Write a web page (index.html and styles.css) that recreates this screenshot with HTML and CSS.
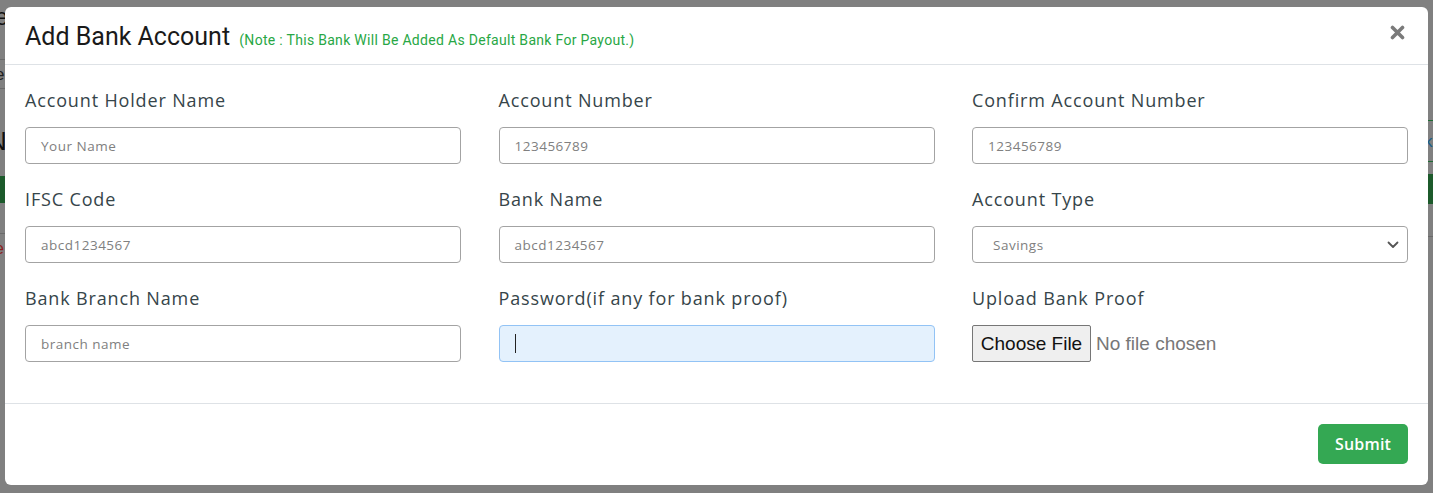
FILE: index.html
```html
<!DOCTYPE html>
<html>
<head>
<meta charset="utf-8">
<link rel="stylesheet" href="styles.css">
</head>
<body>
<div class="page">
  <div class="bg-left">
    <span class="bg-e1">e</span>
    <span class="bg-line l1"></span>
    <span class="bg-e2">e</span>
    <span class="bg-line l2"></span>
    <span class="bg-n">N</span>
    <span class="bg-green g1"></span>
    <span class="bg-line l3"></span>
    <span class="bg-red">e</span>
  </div>
  <div class="bg-right">
    <span class="bg-gline r1"></span>
    <span class="bg-blue">k</span>
    <span class="bg-gline r2"></span>
    <span class="bg-green g2"></span>
    <span class="bg-line r3"></span>
  </div>
</div>
<div class="overlay">
  <div class="modal">
    <div class="modal-header">
      <h4 class="modal-title">Add Bank Account <small class="note">(Note : This Bank Will Be Added As Default Bank For Payout.)</small></h4>
      <button class="close" type="button" aria-label="Close">
        <svg width="15" height="15" viewBox="0 0 15 15"><path d="M2.5 2.5 L12.5 12.5 M12.5 2.5 L2.5 12.5" stroke="#7a7a7a" stroke-width="3.6" stroke-linecap="round"/></svg>
      </button>
    </div>
    <div class="modal-body">
      <div class="field">
        <label>Account Holder Name</label>
        <div class="input"><span class="ph">Your Name</span></div>
      </div>
      <div class="field">
        <label>Account Number</label>
        <div class="input"><span class="ph">123456789</span></div>
      </div>
      <div class="field">
        <label>Confirm Account Number</label>
        <div class="input"><span class="ph">123456789</span></div>
      </div>
      <div class="field">
        <label>IFSC Code</label>
        <div class="input"><span class="ph">abcd1234567</span></div>
      </div>
      <div class="field">
        <label>Bank Name</label>
        <div class="input"><span class="ph">abcd1234567</span></div>
      </div>
      <div class="field">
        <label>Account Type</label>
        <div class="input select"><span class="ph sel">Savings</span>
          <svg class="chev" width="12" height="8" viewBox="0 0 12 8"><path d="M1.5 1.5 L6 6 L10.5 1.5" fill="none" stroke="#555" stroke-width="1.8" stroke-linecap="round" stroke-linejoin="round"/></svg>
        </div>
      </div>
      <div class="field">
        <label>Bank Branch Name</label>
        <div class="input"><span class="ph">branch name</span></div>
      </div>
      <div class="field">
        <label>Password(if any for bank proof)</label>
        <div class="input focus"><span class="caret"></span></div>
      </div>
      <div class="field">
        <label>Upload Bank Proof</label>
        <div class="file"><span class="file-btn">Choose File</span><span class="file-text">No file chosen</span></div>
      </div>
    </div>
    <div class="modal-footer">
      <button class="submit" type="button">Submit</button>
    </div>
  </div>
</div>
</body>
</html>
```

FILE: styles.css
```css
* { box-sizing: border-box; }
html, body { margin: 0; padding: 0; }
body {
  width: 1433px;
  height: 493px;
  overflow: hidden;
  background: #808080;
  font-family: "Open Sans", "Liberation Sans", sans-serif;
  position: relative;
}
.page { position: absolute; inset: 0; }
.bg-left, .bg-right { position: absolute; top: 0; height: 493px; }
.bg-left { left: 0; width: 6px; overflow: hidden; }
.bg-right { right: 0; width: 6px; overflow: hidden; }
.bg-left span, .bg-right span { position: absolute; display: block; }
.bg-e1 { left: -5px; top: 3px; font-size: 24px; color: #111; font-family: "Liberation Sans", sans-serif; }
.bg-e2 { left: -5px; top: 65px; font-size: 17px; color: #222; font-family: "Liberation Sans", sans-serif; }
.bg-n { left: -12px; top: 126px; font-size: 26px; color: #111; font-family: "Liberation Sans", sans-serif; }
.bg-red { left: -5px; top: 240px; font-size: 16px; color: #8b1c1c; font-family: "Liberation Sans", sans-serif; }
.bg-blue { left: -3px; top: 132px; font-size: 17px; color: #1a5e8a; font-family: "Liberation Sans", sans-serif; }
.bg-line { left: 0; width: 6px; height: 1px; background: #6a6a6a; }
.l1 { top: 59px; } .l2 { top: 88px; } .l3 { top: 233px; }
.r3 { top: 236px; }
.bg-gline { left: 0; width: 6px; height: 1px; background: #1e6b34; }
.r1 { top: 120px; } .r2 { top: 161px; }
.bg-green { left: 0; width: 6px; background: #1c5a2b; }
.g1 { top: 176px; height: 27px; }
.g2 { top: 174px; height: 30px; }

.overlay {
  position: absolute;
  inset: 0;
  padding: 7px 5px 8px 5px;
}
.modal {
  background: #fff;
  border-radius: 6px;
  height: 478px;
  display: flex;
  flex-direction: column;
  overflow: hidden;
}
.modal-header {
  display: flex;
  align-items: center;
  justify-content: space-between;
  height: 58px;
  padding: 0 20px;
  border-bottom: 1px solid #dee2e6;
}
.modal-title {
  margin: 0;
  font-family: "Roboto", sans-serif;
  font-weight: 400;
  font-size: 25px;
  letter-spacing: 0px;
  color: #1a1a1a;
  line-height: 30px;
  padding-top: 5px;
}
.note {
  font-family: "Roboto", sans-serif;
  font-size: 14px;
  letter-spacing: 0.3px;
  color: #28a745;
  margin-left: 3px;
  font-weight: 400;
}
.close {
  border: 0;
  background: none;
  padding: 0;
  margin: 0 3px 6px 0;
  width: 15px;
  height: 15px;
  display: flex;
}
.modal-body {
  display: grid;
  grid-template-columns: repeat(3, 1fr);
  column-gap: 37.5px;
  row-gap: 22px;
  padding: 22px 20px 41px 20px;
  border-bottom: 1px solid #dee2e6;
}
.field { display: flex; flex-direction: column; }
.field label {
  font-size: 18px;
  line-height: 26px;
  height: 26px;
  color: #36454a;
  letter-spacing: 0.85px;
  margin-bottom: 14px;
  white-space: nowrap;
}
.input {
  height: 37px;
  border: 1px solid #a3a3a3;
  border-radius: 4px;
  display: flex;
  align-items: center;
  padding: 0 15px;
  position: relative;
}
.ph {
  font-size: 13.5px;
  color: #808080;
  letter-spacing: 0.5px;
}
.ph.sel { padding-left: 5px; }
.select { justify-content: space-between; padding-right: 8px; }
.chev { margin-top: 1px; }
.focus {
  background: #e4f1fd;
  border-color: #92c3f5;
}
.caret {
  width: 1px;
  height: 19px;
  background: #222;
}
.file { display: flex; align-items: center; height: 37px; }
.file-btn {
  font-family: "Liberation Sans", Arial, sans-serif;
  font-size: 19px;
  color: #111;
  background: #efefef;
  border: 1px solid #767676;
  border-radius: 2px;
  height: 37px;
  width: 119px;
  display: flex;
  align-items: center;
  justify-content: center;
}
.file-text {
  font-family: "Liberation Sans", Arial, sans-serif;
  font-size: 19px;
  color: #777;
  margin-left: 5px;
}
.modal-footer {
  flex: 1;
  display: flex;
  justify-content: flex-end;
  align-items: flex-start;
  padding: 20px 20px 0 20px;
}
.submit {
  width: 90px;
  height: 40px;
  background: #34a853;
  color: #fff;
  border: 0;
  border-radius: 5px;
  font-family: "Open Sans", sans-serif;
  font-size: 16px;
  font-weight: 600;
  letter-spacing: 0.2px;
}
```
